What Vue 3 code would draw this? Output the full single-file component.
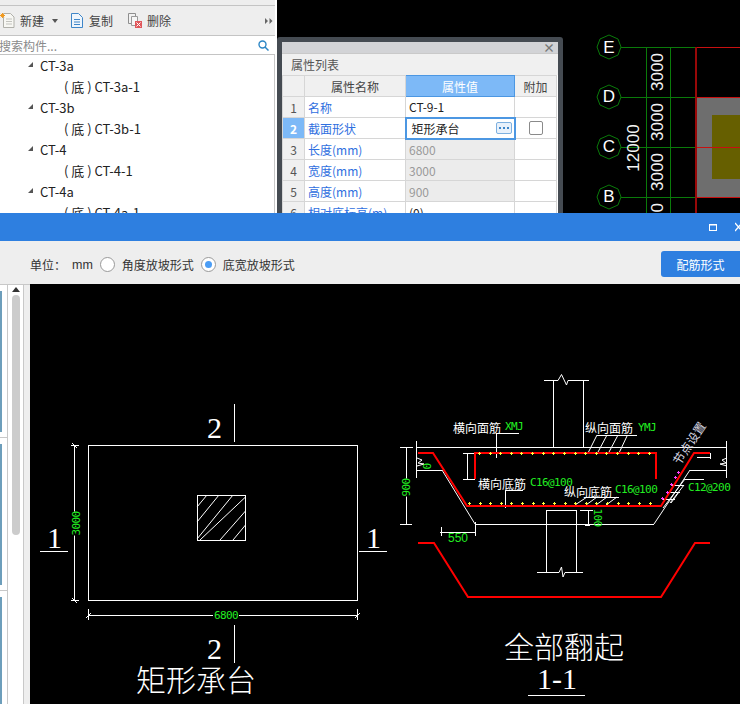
<script setup>
const treeItems = [
  { label: 'CT-3a', child: false },
  { label: '( 底 ) CT-3a-1', child: true },
  { label: 'CT-3b', child: false },
  { label: '( 底 ) CT-3b-1', child: true },
  { label: 'CT-4', child: false },
  { label: '( 底 ) CT-4-1', child: true },
  { label: 'CT-4a', child: false },
  { label: '( 底 ) CT-4a-1', child: true }
]

const props = [
  { no: 1, name: '名称', value: 'CT-9-1' },
  { no: 2, name: '截面形状', value: '矩形承台', active: true },
  { no: 3, name: '长度(mm)', value: '6800', off: true },
  { no: 4, name: '宽度(mm)', value: '3000', off: true },
  { no: 5, name: '高度(mm)', value: '900', off: true },
  { no: 6, name: '相对底标高(m)', value: '(0)' }
]

const axes = [
  { label: 'E', y: 47 },
  { label: 'D', y: 97 },
  { label: 'C', y: 147 },
  { label: 'B', y: 197 }
]

// 钢筋点，画成小十字
const cross = (x, y) => `M${x - 1.5} ${y}h3M${x} ${y - 1.5}v3`
const rowDots = (start, count, y) =>
  Array.from({ length: count }, (_, i) => cross(Math.round(start + i * 10.62) + 0.5, y)).join('')

const yellowDots = rowDots(479, 17, 453.5) + rowDots(469, 18, 503.5)
const pinkDots = [[662, 498], [667, 492], [671, 484], [675, 477], [678, 472]]
  .map(([x, y]) => cross(x + 0.5, y + 0.5))
  .join('')
</script>

<template>
  <div class="page">
    <div class="top">
      <!-- 构件列表 -->
      <div class="tree-panel">
        <div class="tree-strip"></div>
        <div class="tree-toolbar">
          <span class="tool tool-new">
            <svg width="15" height="15" viewBox="0 0 15 15"><path d="M3.500 .5h7l3.500 3.500v10.500h-10.500z" fill="#f7f7f3" stroke="#b0b0aa"/><path d="M6 6h6M6 8.500h6M6 11h6" stroke="#c3c3be"/><path d="M2.500 0v5M0 2.500h5M.8 .8l3.400 3.400M4.200 .8L.8 4.200" stroke="#f29a1f"/></svg>
            新建
            <i class="caret"></i>
          </span>
          <span class="tool tool-copy">
            <svg width="12" height="15" viewBox="0 0 12 15"><path d="M.5 .5h7l4 4v10h-11z" fill="#eef5fc" stroke="#3f86c8"/><path d="M3 6.500h6M3 9h6M3 11.500h6" stroke="#3f86c8"/></svg>
            复制
          </span>
          <span class="tool tool-del">
            <svg width="14" height="15" viewBox="0 0 14 15"><path d="M.5 .5h7v10h-7z" fill="#f2f2f2" stroke="#8f8f8f"/><path d="M3.500 3.500h6v9h-6z" fill="#f7f7f7" stroke="#9a9a9a"/><rect x="7" y="8" width="7" height="7" fill="#e0575b"/><path d="M8.500 9.500l4 4M12.500 9.500l-4 4" stroke="#fff"/></svg>
            删除
          </span>
          <span class="more">
            <svg width="8" height="8" viewBox="0 0 8 8"><path d="M0 1l3 3-3 3zM4.500 1l3 3-3 3z" fill="#666"/></svg>
          </span>
        </div>
        <div class="tree-search">
          <span class="search-text">搜索构件...</span>
          <svg width="11" height="11" viewBox="0 0 11 11"><circle cx="4.500" cy="4.500" r="3.500" fill="none" stroke="#2c86c5" stroke-width="1.400"/><path d="M7 7l3.500 3.500" stroke="#2c86c5" stroke-width="1.500"/></svg>
        </div>
        <div class="tree-list">
          <div v-for="item in treeItems" :key="item.label" class="tree-row" :class="{ child: item.child }">
            <i v-if="!item.child" class="tree-arrow"></i>{{ item.label }}
          </div>
        </div>
      </div>

      <!-- CAD 画布 -->
      <div class="cad-top">
        <svg class="axis-svg" width="150" height="213" viewBox="590 0 150 213">
          <rect x="696" y="97" width="44" height="100" fill="#6e6e6e" />
          <rect x="712" y="115" width="28" height="64" fill="#665f00" />
          <g stroke="#0a7a0a" fill="none">
            <template v-for="a in axes" :key="a.label">
              <polygon :points="`609,${a.y - 12} 618,${a.y - 8} 621,${a.y} 618,${a.y + 8} 609,${a.y + 12} 600,${a.y + 8} 597,${a.y} 600,${a.y - 8}`" />
              <path :d="`M621 ${a.y + 0.5}H696`" />
            </template>
            <path d="M646.500 47V213M670.500 47V213" />
          </g>
          <path d="M696 47.500H740M696 97.500H740M696 147.500H740M696 197.500H740" stroke="#c81010" fill="none" />
          <path d="M696 47V213" stroke="#980808" stroke-width="2" fill="none" />
        </svg>
        <div v-for="a in axes" :key="a.label" class="axis-label" :class="'axis-' + a.label">{{ a.label }}</div>
        <div class="dim dim-1">3000</div>
        <div class="dim dim-2">3000</div>
        <div class="dim dim-3">3000</div>
        <div class="dim dim-4">3000</div>
        <div class="dim dim-total">12000</div>

        <!-- 属性列表 -->
        <div class="prop-window">
          <div class="prop-close">×</div>
          <div class="prop-title">属性列表</div>
          <table class="prop-table">
            <colgroup>
              <col class="col-no" />
              <col class="col-name" />
              <col class="col-value" />
              <col class="col-extra" />
            </colgroup>
            <tr class="head">
              <th></th>
              <th>属性名称</th>
              <th class="head-active">属性值</th>
              <th>附加</th>
            </tr>
            <tr v-for="p in props" :key="p.no">
              <td class="no" :class="{ 'no-active': p.active }">{{ p.no }}</td>
              <td class="name">{{ p.name }}</td>
              <td class="value" :class="{ off: p.off, editing: p.active }">
                {{ p.value }}
                <span v-if="p.active" class="dots"><i></i><i></i><i></i></span>
              </td>
              <td class="extra"><i v-if="p.active" class="check"></i></td>
            </tr>
          </table>
        </div>
      </div>
    </div>

    <!-- 配筋形式弹窗 -->
    <div class="dialog">
      <div class="titlebar">
        <svg width="8" height="7" viewBox="0 0 8 7"><rect x=".5" y=".5" width="7" height="6" fill="none" stroke="#fff"/><path d="M0 1h8" stroke="#fff"/></svg>
        <svg class="x-icon" width="12" height="10" viewBox="0 0 12 10"><path d="M0 1l7 8M7 1L0 9" stroke="#fff" stroke-width="1.400"/></svg>
      </div>
      <div class="options">
        <span class="unit">单位：</span>
        <span class="mm">mm</span>
        <i class="radio"></i>
        <span class="radio-label">角度放坡形式</span>
        <i class="radio on"></i>
        <span class="radio-label">底宽放坡形式</span>
        <button class="rebar-btn">配筋形式</button>
      </div>
      <div class="dialog-body">
        <div class="side-list">
          <div class="thumbs">
            <div class="thumb"><i></i></div>
            <div class="thumb"><i></i></div>
            <div class="thumb last"><i></i></div>
          </div>
          <div class="scrollbar">
            <svg width="8" height="5" viewBox="0 0 8 5"><path d="M4 0l4 5H0z" fill="#333"/></svg>
            <div class="thumb-bar"></div>
          </div>
        </div>

        <div class="drawing">
          <svg class="lines" width="710" height="420" viewBox="30 284 710 420">
            <!-- 平面图 -->
            <g stroke="#fff" fill="none" shape-rendering="crispEdges">
              <rect x="88.500" y="445.500" width="269" height="155" />
              <rect x="197.500" y="495.500" width="48" height="45" />
              <path d="M234.500 404V442M234.500 625V663" />
              <path d="M40 551.500H68M359 551.500H387" />
              <path d="M74.500 445V601M71 445.500H79M71 600.500H79M88 615.500H358M88.500 609V620M357.500 609V620" />
            </g>
            <path d="M197 507l10-12M197 522l22-27M197 539l36-44M200 540l45.500-43M220 540l25.500-29M233 540l12.500-15" stroke="#fff" fill="none" />
            <path d="M72 443l5 5M72 598l5 5M86 618l5-5M355 618l5-5" stroke="#fff" fill="none" />

            <!-- 剖面 -->
            <g stroke="#fff" fill="none" shape-rendering="crispEdges">
              <path d="M416 447.500H727M416.500 441V478M726.500 441V478" />
              <path d="M553.500 380V447M583.500 380V447" />
              <path d="M400 447.500H413M400 524.500H412M406.500 447V524" />
              <path d="M417 470.500H442M690 470.500H727M697 457.500H710M710.500 453V459" />
              <path d="M463 453.500H475M463 479.500H475M467.500 453V479" />
              <path d="M497 433.500H519M496.500 433V458" />
              <path d="M505 490.500H523M505.500 490V508" />
              <path d="M475 524.500H654" />
              <path d="M546.500 510V572M576.500 510V572M546 510.500H577" />
              <path d="M580 510.500H593M585 525.500H590M588.500 510V525" />
              <path d="M440 532.500H476M441.500 527V536M475.500 522V536" />
              <path d="M597 435.500H637M585 497.500H619" />
              <path d="M685 479.500H704M672 485.500H684M667 492.500H680M662 499.500H675" />
            </g>
            <path d="M442 470l33 54M654 524l36-54" stroke="#fff" fill="none" />
            <path d="M597 435l-9 18M607 435l-9.500 18M618 435l-9.500 18M627.500 435l-8.500 18" stroke="#fff" fill="none" />
            <path d="M587 497l-12 8M597 497l-11 8M607 497l-11 8M617 497l-11 8" stroke="#fff" fill="none" />
            <path d="M685 479l-22 29M684 485l-14 18M679 492l-8 11" stroke="#fff" fill="none" />
            <path d="M417 458l5 2-4 3 6 1-7 2M727 458l-5 2 4 3-6 1 7 2" stroke="#fff" fill="none" />
            <path d="M544 380.500H558L561.500 374.500 566.500 385 568 380.500H589" stroke="#fff" fill="none" />
            <path d="M537 572.500H559L561.500 567 563 577 565 572.500H583" stroke="#fff" fill="none" />

            <g stroke="#f00" stroke-width="2" fill="none">
              <path d="M418 453H433L467 506H661L694 453H710" />
              <path d="M475 479V453H656V479" />
              <path d="M418 543H434L468 597H661L695 543H710" />
            </g>
            <path :d="yellowDots" stroke="#ffff40" fill="none" shape-rendering="crispEdges" />
            <path :d="pinkDots" stroke="#ff40ff" fill="none" shape-rendering="crispEdges" />
            <path d="M528 695.500H585" stroke="#fff" fill="none" shape-rendering="crispEdges" />
          </svg>

          <!-- 图上文字 -->
          <span class="t big t-2a">2</span>
          <span class="t big t-2b">2</span>
          <span class="t big t-1a">1</span>
          <span class="t big t-1b">1</span>
          <span class="t green mono t-3000">3000</span>
          <span class="t green mono t-6800">6800</span>
          <span class="t title t-shape">矩形承台</span>
          <span class="t title t-all">全部翻起</span>
          <span class="t big t-11">1-1</span>

          <span class="t label l-1">横向面筋</span>
          <span class="t green mono m-1">XMJ</span>
          <span class="t label l-2">纵向面筋</span>
          <span class="t green mono m-2">YMJ</span>
          <span class="t label l-3">横向底筋</span>
          <span class="t green mono m-3">C16@100</span>
          <span class="t label l-4">纵向底筋</span>
          <span class="t green mono m-4">C16@100</span>
          <span class="t green mono m-5">C12@200</span>
          <span class="t green m-6">550</span>
          <span class="t green mono m-7">900</span>
          <span class="t green mono m-8">0</span>
          <span class="t green mono m-9">100</span>
          <span class="t slope">节点设置</span>
        </div>
      </div>
    </div>
  </div>
</template>

<style>
html, body { margin: 0; background: #000; }
</style>

<style scoped>
.page {
  width: 740px;
  height: 704px;
  overflow: hidden;
  display: flex;
  flex-direction: column;
  font-family: "Noto Sans CJK SC", "Liberation Sans", sans-serif;
  font-size: 12px;
  color: #333;
  background: #000;
}
.top {
  height: 213px;
  display: flex;
  flex: none;
}
.tree-panel {
  width: 277px;
  flex: none;
  box-sizing: border-box;
  background: #fff;
  border-right: 2px solid #fff;
  display: flex;
  flex-direction: column;
  overflow: hidden;
}
.tree-strip {
  height: 5px;
  flex: none;
  background: #eeeeee;
}
.tree-toolbar {
  height: 29px;
  background: #eeeeee;
  border-top: 1px solid #c4c4c4;
  border-bottom: 1px solid #c4c4c4;
  display: flex;
  align-items: center;
  flex: none;
}
.tool {
  display: flex;
  align-items: center;
  gap: 6px;
  color: #444;
}
.tool-new {
  margin-left: 0;
  gap: 5px;
}
.tool-copy {
  margin-left: 13px;
}
.tool-del {
  margin-left: 15px;
  gap: 5px;
}
.caret {
  display: inline-block;
  border: 3px solid transparent;
  border-top: 4px solid #555;
  border-bottom: 0;
  margin-left: 3px;
}
.more {
  margin-left: auto;
  margin-right: 2px;
  display: flex;
}
.tree-search {
  height: 19px;
  box-sizing: border-box;
  border-bottom: 1px solid #c4c4c4;
  display: flex;
  align-items: center;
  justify-content: space-between;
  padding-right: 6px;
  flex: none;
}
.search-text {
  color: #8a8a8a;
  margin-left: -1px;
}
.tree-list {
  border-right: 1px solid #c8c8c8;
  flex: 1;
}
.tree-row {
  height: 21px;
  line-height: 21px;
  padding-left: 40px;
  position: relative;
  color: #222;
  font-size: 13px;
  white-space: nowrap;
}
.tree-row.child {
  padding-left: 64px;
}
.tree-arrow {
  position: absolute;
  left: 28px;
  top: 7px;
  border-left: 5px solid transparent;
  border-bottom: 5px solid #555;
  border-right: 0;
}
.cad-top {
  flex: 1;
  position: relative;
  background: #000;
  overflow: hidden;
}
.axis-svg {
  position: absolute;
  right: 0;
  top: 0;
}
.axis-label {
  position: absolute;
  width: 24px;
  left: 320px;
  text-align: center;
  color: #fff;
  font-size: 17px;
  line-height: 24px;
  font-family: "Liberation Sans", sans-serif;
}
.axis-E { top: 36px; }
.axis-D { top: 85px; }
.axis-C { top: 135px; }
.axis-B { top: 185px; }
.dim {
  position: absolute;
  color: #f4f4f4;
  font-family: "Liberation Sans", sans-serif;
  font-size: 17px;
  line-height: 16px;
  transform: rotate(-90deg);
  transform-origin: center;
}
.dim-1 { left: 362px; top: 64px; }
.dim-2 { left: 362px; top: 114px; }
.dim-3 { left: 362px; top: 164px; }
.dim-4 { left: 362px; top: 214px; }
.dim-total { left: 333px; top: 140px; }
.prop-window {
  position: absolute;
  left: 0;
  top: 37px;
  width: 286px;
  height: 200px;
  background: #fff;
  border: 5px solid #454b52;
  border-radius: 3px;
  box-sizing: border-box;
}
.prop-close {
  height: 11px;
  background: #d2d3d6;
  text-align: right;
  padding-right: 3px;
  color: #777;
  font-size: 12px;
  line-height: 11px;
  font-weight: bold;
}
.prop-title {
  height: 22px;
  line-height: 21px;
  background: #f0f0f0;
  border-top: 1px solid #c9c9c9;
  padding-left: 9px;
  color: #555;
  box-sizing: border-box;
}
.prop-table {
  border-collapse: collapse;
  table-layout: fixed;
  width: 274px;
  background: #fff;
}
.col-no { width: 22px; }
.col-name { width: 101px; }
.col-value { width: 109px; }
.col-extra { width: 42px; }
.prop-table th,
.prop-table td {
  border: 1px solid #d6d6d6;
  height: 21px;
  padding: 0;
  font-weight: normal;
  box-sizing: border-box;
  white-space: nowrap;
  overflow: hidden;
}
.head th {
  background: #f0f0f0;
  color: #444;
  text-align: center;
}
.prop-table .head-active {
  background: #7db9f7;
  color: #fff;
  border: 1px solid #4c97e2;
}
.prop-table .no {
  background: #f0f0f0;
  text-align: center;
  color: #555;
}
.prop-table .no-active {
  background: #7db9f7;
  color: #fff;
  font-weight: bold;
}
.prop-table .name {
  color: #2f6fe0;
  padding-left: 3px;
}
.prop-table .value {
  padding-left: 3px;
  color: #222;
  position: relative;
}
.prop-table .off {
  background: #ececec;
  color: #9a9a9a;
}
.prop-table .editing {
  border: 2px solid #4c97e2;
  padding-left: 5px;
}
.dots {
  position: absolute;
  right: 2px;
  top: 3px;
  width: 16px;
  height: 12px;
  box-sizing: border-box;
  border: 1px solid #7db0e0;
  border-radius: 2px;
  background: #e8f1fb;
  display: flex;
  align-items: center;
  justify-content: center;
  gap: 2px;
}
.dots i {
  width: 2px;
  height: 2px;
  background: #3f86c8;
}
.extra {
  text-align: center;
  vertical-align: middle;
}
.check {
  display: block;
  width: 14px;
  height: 14px;
  box-sizing: border-box;
  margin: 0 auto;
  border: 1px solid #8a8a8a;
  border-radius: 2px;
}
.dialog {
  flex: 1;
  display: flex;
  flex-direction: column;
  position: relative;
  z-index: 1;
  min-height: 0;
}
.titlebar {
  height: 28px;
  flex: none;
  background: #2e7fe0;
  display: flex;
  align-items: center;
  justify-content: flex-end;
  gap: 18px;
  margin-right: -7px;
}
.options {
  height: 43px;
  box-sizing: border-box;
  padding: 3px 0 0 30px;
  flex: none;
  background: #eeeeee;
  display: flex;
  align-items: center;
  color: #333;
}
.mm {
  margin-left: 6px;
  padding-top: 2px;
  font-family: "Liberation Sans", sans-serif;
  font-size: 12.500px;
}
.radio {
  width: 13px;
  height: 13px;
  border: 1px solid #999;
  border-radius: 50%;
  background: #fff;
  margin-left: 7px;
  margin-right: 7px;
  position: relative;
}
.radio.on::after {
  content: "";
  position: absolute;
  left: 3px;
  top: 3px;
  width: 7px;
  height: 7px;
  border-radius: 50%;
  background: #4b9df5;
}
.rebar-btn {
  margin-left: auto;
  width: 79px;
  height: 26px;
  border: 0;
  border-radius: 3px 0 0 3px;
  background: #2e7fe0;
  color: #fff;
  font-family: inherit;
  font-size: 12px;
}
.dialog-body {
  flex: 1;
  display: flex;
  min-height: 0;
}
.side-list {
  width: 30px;
  flex: none;
  box-sizing: border-box;
  display: flex;
  background: #fff;
  border-top: 1px solid #c8c8c8;
}
.thumbs {
  width: 8px;
  flex: none;
  box-sizing: border-box;
  border-right: 1px solid #c8c8c8;
}
.thumb {
  height: 153px;
  box-sizing: border-box;
  padding: 6px 0 5px;
  border-bottom: 1px solid #c8c8c8;
}
.thumb.last {
  border-bottom: 0;
  height: 114px;
  padding-bottom: 0;
}
.thumb i {
  display: block;
  width: 2px;
  height: 100%;
  background: #6d9ebb;
}
.scrollbar {
  width: 22px;
  flex: none;
  box-sizing: border-box;
  background: #fff;
  border-right: 6px solid #eeeeee;
  box-shadow: inset -1px 0 0 #c8c8c8;
  display: flex;
  flex-direction: column;
  align-items: center;
  padding-top: 2px;
  gap: 3px;
}
.thumb-bar {
  width: 8px;
  height: 240px;
  border-radius: 4px;
  background: #cccccc;
}
.drawing {
  flex: 1;
  position: relative;
  background: #000;
  overflow: hidden;
}
.lines {
  position: absolute;
  left: 0;
  top: 0;
}
.t {
  position: absolute;
  color: #fff;
  white-space: nowrap;
  line-height: 1;
}
.big {
  font-family: "Liberation Serif", serif;
  font-size: 30px;
}
.title {
  font-family: "Noto Sans CJK SC", sans-serif;
  font-weight: 300;
  font-size: 30px;
}
.t.green {
  color: #22ee22;
}
.label {
  font-size: 12px;
}
.mono {
  font-family: "DejaVu Sans Mono", monospace;
  font-size: 11px;
  letter-spacing: -0.6px;
}
.t-2a { left: 177px; top: 129px; }
.t-2b { left: 177px; top: 350px; }
.t-1a { left: 17px; top: 239px; }
.t-1b { left: 336px; top: 239px; }
.t-3000 { left: 34px; top: 234px; background: #000; transform: rotate(-90deg); }
.t-6800 { left: 183px; top: 326px; background: #000; padding: 0 1px; }
.t-shape { left: 106px; top: 379px; }
.t-all { left: 474px; top: 346px; }
.t-11 { left: 507px; top: 380px; }
.l-1 { left: 423px; top: 138px; }
.m-1 { left: 475px; top: 137px; }
.l-2 { left: 555px; top: 138px; }
.m-2 { left: 608px; top: 138px; }
.l-3 { left: 448px; top: 194px; }
.m-3 { left: 500px; top: 193px; }
.l-4 { left: 534px; top: 202px; }
.m-4 { left: 585px; top: 200px; }
.m-5 { left: 658px; top: 198px; }
.m-6 { left: 418px; top: 248px; font-family: "Liberation Sans", sans-serif; font-size: 12px; }
.m-7 { left: 367px; top: 198px; background: #000; transform: rotate(-90deg); }
.m-8 { left: 394px; top: 177px; transform: rotate(-90deg); }
.m-9 { left: 558px; top: 228px; transform: rotate(90deg); }
.slope { left: 635px; top: 153px; font-size: 12px; transform: rotate(-56deg); color: #d8d8e4; }
</style>
